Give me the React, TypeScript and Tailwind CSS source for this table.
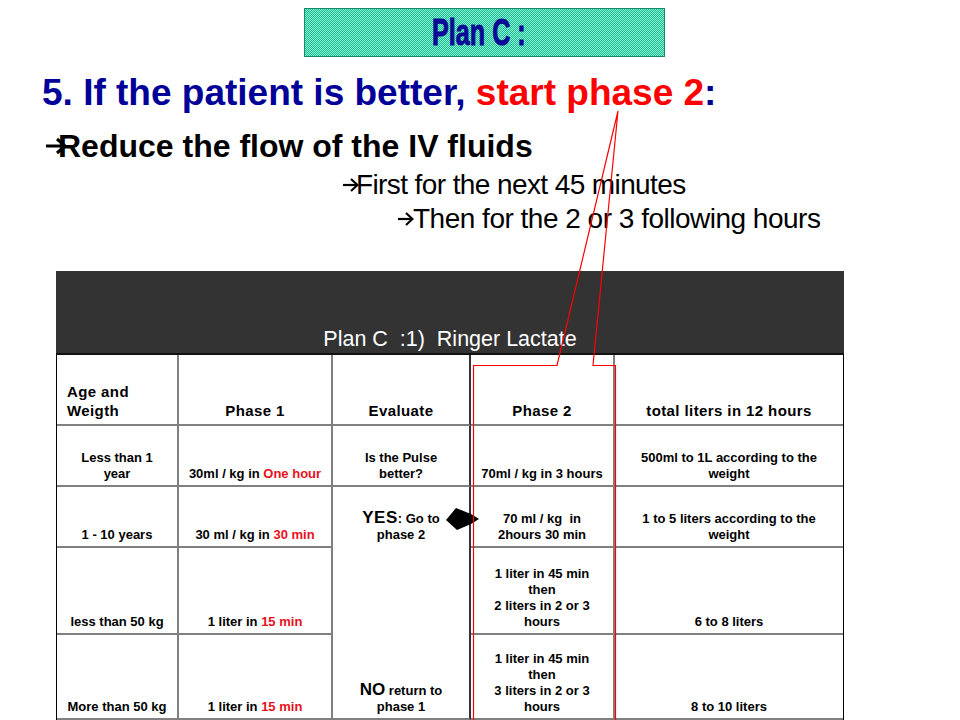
import React from "react";

const ArrowBig = () => (
  <svg width="22" height="18" viewBox="0 0 22 18" className="shrink-0">
    <path d="M1 9 H19" stroke="#000" strokeWidth="3" fill="none" />
    <path d="M12 2 L20 9 L12 16" stroke="#000" strokeWidth="3" fill="none" />
  </svg>
);

const ArrowSmall = () => (
  <svg width="17" height="16" viewBox="0 0 17 16" className="shrink-0">
    <path d="M1 8 H15" stroke="#000" strokeWidth="2.2" fill="none" />
    <path d="M9 2 L15.5 8 L9 14" stroke="#000" strokeWidth="2.2" fill="none" />
  </svg>
);

const R = ({ children }: { children: React.ReactNode }) => (
  <span className="text-[#e8101c]">{children}</span>
);

const cell =
  "border-b-2 border-r-2 border-[#808080] flex flex-col justify-end items-center text-center pb-[3px] text-[13px] leading-[16px] font-bold text-black";
const hcell =
  "border-b-2 border-r-2 border-[#808080] flex flex-col justify-end items-center text-center pb-[4px] text-[15px] leading-[18px] font-bold tracking-[0.4px] text-black";

export default function App() {
  return (
    <div
      className="relative w-[960px] h-[720px] overflow-hidden bg-white"
      style={{ fontFamily: '"Liberation Sans", Arial, sans-serif' }}
    >
      {/* Title box */}
      <div className="ml-[304px] mt-[8px] w-[361px] h-[49px] border border-[#138a68] bg-[repeating-conic-gradient(#17c194_0%_25%,#8eeed4_0%_50%)] bg-[length:2px_2px] flex items-center justify-center">
        <span className="inline-block mr-[12px] scale-x-[0.68] text-[37px] leading-none font-black text-[#0a0a96] [-webkit-text-stroke:1px_#0a0a96]">
          Plan C :
        </span>
      </div>

      {/* Heading */}
      <div className="mt-[16px] h-[40px] leading-[40px] pl-[42px] text-[37px] font-bold text-[#000099] whitespace-nowrap">
        5. If the patient is better, <span className="text-[#ff0000]">start phase 2</span>:
      </div>

      {/* Reduce line */}
      <div className="mt-[15px] h-[36px] flex items-center pl-[45px]">
        <ArrowBig />
        <span className="ml-[-9px] text-[32px] leading-[36px] font-bold text-black whitespace-nowrap">
          Reduce the flow of the IV fluids
        </span>
      </div>

      {/* First line */}
      <div className="mt-[4px] h-[34px] flex items-center pl-[342px]">
        <ArrowSmall />
        <span className="ml-[-3px] text-[28px] leading-[34px] tracking-[-0.6px] text-black whitespace-nowrap">
          First for the next 45 minutes
        </span>
      </div>

      {/* Then line */}
      <div className="h-[34px] flex items-center pl-[397px]">
        <ArrowSmall />
        <span className="ml-[-1px] text-[28px] leading-[34px] tracking-[-0.5px] text-black whitespace-nowrap">
          Then for the 2 or 3 following hours
        </span>
      </div>

      {/* Table */}
      <div className="mt-[35px] ml-[56px] w-[788px]">
        <div className="h-[84px] bg-[#333333] border-b-2 border-[#111111] flex items-end justify-center pb-[2px]">
          <span className="text-white text-[21.5px] leading-[24px] whitespace-pre">
            {"Plan C  :1)  Ringer Lactate"}
          </span>
        </div>
        <div className="grid grid-cols-[122px_154px_138px_144px_228px] grid-rows-[71px_61px_61px_87px_85px] border-l border-r border-black">
          {/* header row */}
          <div className={hcell + " !items-start !text-left pl-[10px] leading-[19px]"}>
            <span>Age and</span>
            <span>Weigth</span>
          </div>
          <div className={hcell}>Phase 1</div>
          <div className={hcell + " !border-r-[#333333]"}>Evaluate</div>
          <div className={hcell}>Phase 2</div>
          <div className={hcell + " !border-r-0"}>total liters in 12 hours</div>

          {/* row 1 */}
          <div className={cell}>
            <span>Less than 1</span>
            <span>year</span>
          </div>
          <div className={cell}>
            <span>
              30ml / kg in <R>One hour</R>
            </span>
          </div>
          <div className={cell + " !border-r-[#333333]"}>
            <span>Is the Pulse</span>
            <span>better?</span>
          </div>
          <div className={cell}>70ml / kg in 3 hours</div>
          <div className={cell + " !border-r-0"}>
            <span>500ml to 1L according to the</span>
            <span>weight</span>
          </div>

          {/* row 2 */}
          <div className={cell}>1 - 10 years</div>
          <div className={cell}>
            <span>
              30 ml / kg in <R>30 min</R>
            </span>
          </div>
          <div className="row-span-3 border-b-2 border-r-2 border-r-[#333333] border-b-[#808080] flex flex-col text-[13px] leading-[16px] font-bold text-black text-center">
            <div className="h-[61px] flex flex-col justify-end items-center pb-[5px]">
              <span>
                <span className="text-[17px] tracking-[0.5px]">YES</span>: Go to
              </span>
              <span>phase 2</span>
            </div>
            <div className="flex-1 flex flex-col justify-end items-center pb-[3px]">
              <span>
                <span className="text-[17px]">NO</span> return to
              </span>
              <span>phase 1</span>
            </div>
          </div>
          <div className={cell}>
            <span>70 ml / kg&nbsp; in</span>
            <span>2hours 30 min</span>
          </div>
          <div className={cell + " !border-r-0"}>
            <span>1 to 5 liters according to the</span>
            <span>weight</span>
          </div>

          {/* row 3 */}
          <div className={cell}>less than 50 kg</div>
          <div className={cell}>
            <span>
              1 liter in <R>15 min</R>
            </span>
          </div>
          <div className={cell}>
            <span>1 liter in 45 min</span>
            <span>then</span>
            <span>2 liters in 2 or 3</span>
            <span>hours</span>
          </div>
          <div className={cell + " !border-r-0"}>6 to 8 liters</div>

          {/* row 4 */}
          <div className={cell}>More than 50 kg</div>
          <div className={cell}>
            <span>
              1 liter in <R>15 min</R>
            </span>
          </div>
          <div className={cell}>
            <span>1 liter in 45 min</span>
            <span>then</span>
            <span>3 liters in 2 or 3</span>
            <span>hours</span>
          </div>
          <div className={cell + " !border-r-0"}>8 to 10 liters</div>
        </div>
      </div>

      {/* Overlay: callout + diamond arrow */}
      <svg
        className="absolute left-0 top-0 pointer-events-none"
        width="960"
        height="720"
        viewBox="0 0 960 720"
      >
        <polygon
          points="446,520 456,508 471,514 479,519 471,524 457,530"
          fill="#000"
        />
        <polyline
          points="473.5,722 473.5,365.5 557,365.5 618,111 593,365.5 615.5,365.5 615.5,722"
          fill="none"
          stroke="#ff0000"
          strokeWidth="1.2"
        />
      </svg>
    </div>
  );
}
